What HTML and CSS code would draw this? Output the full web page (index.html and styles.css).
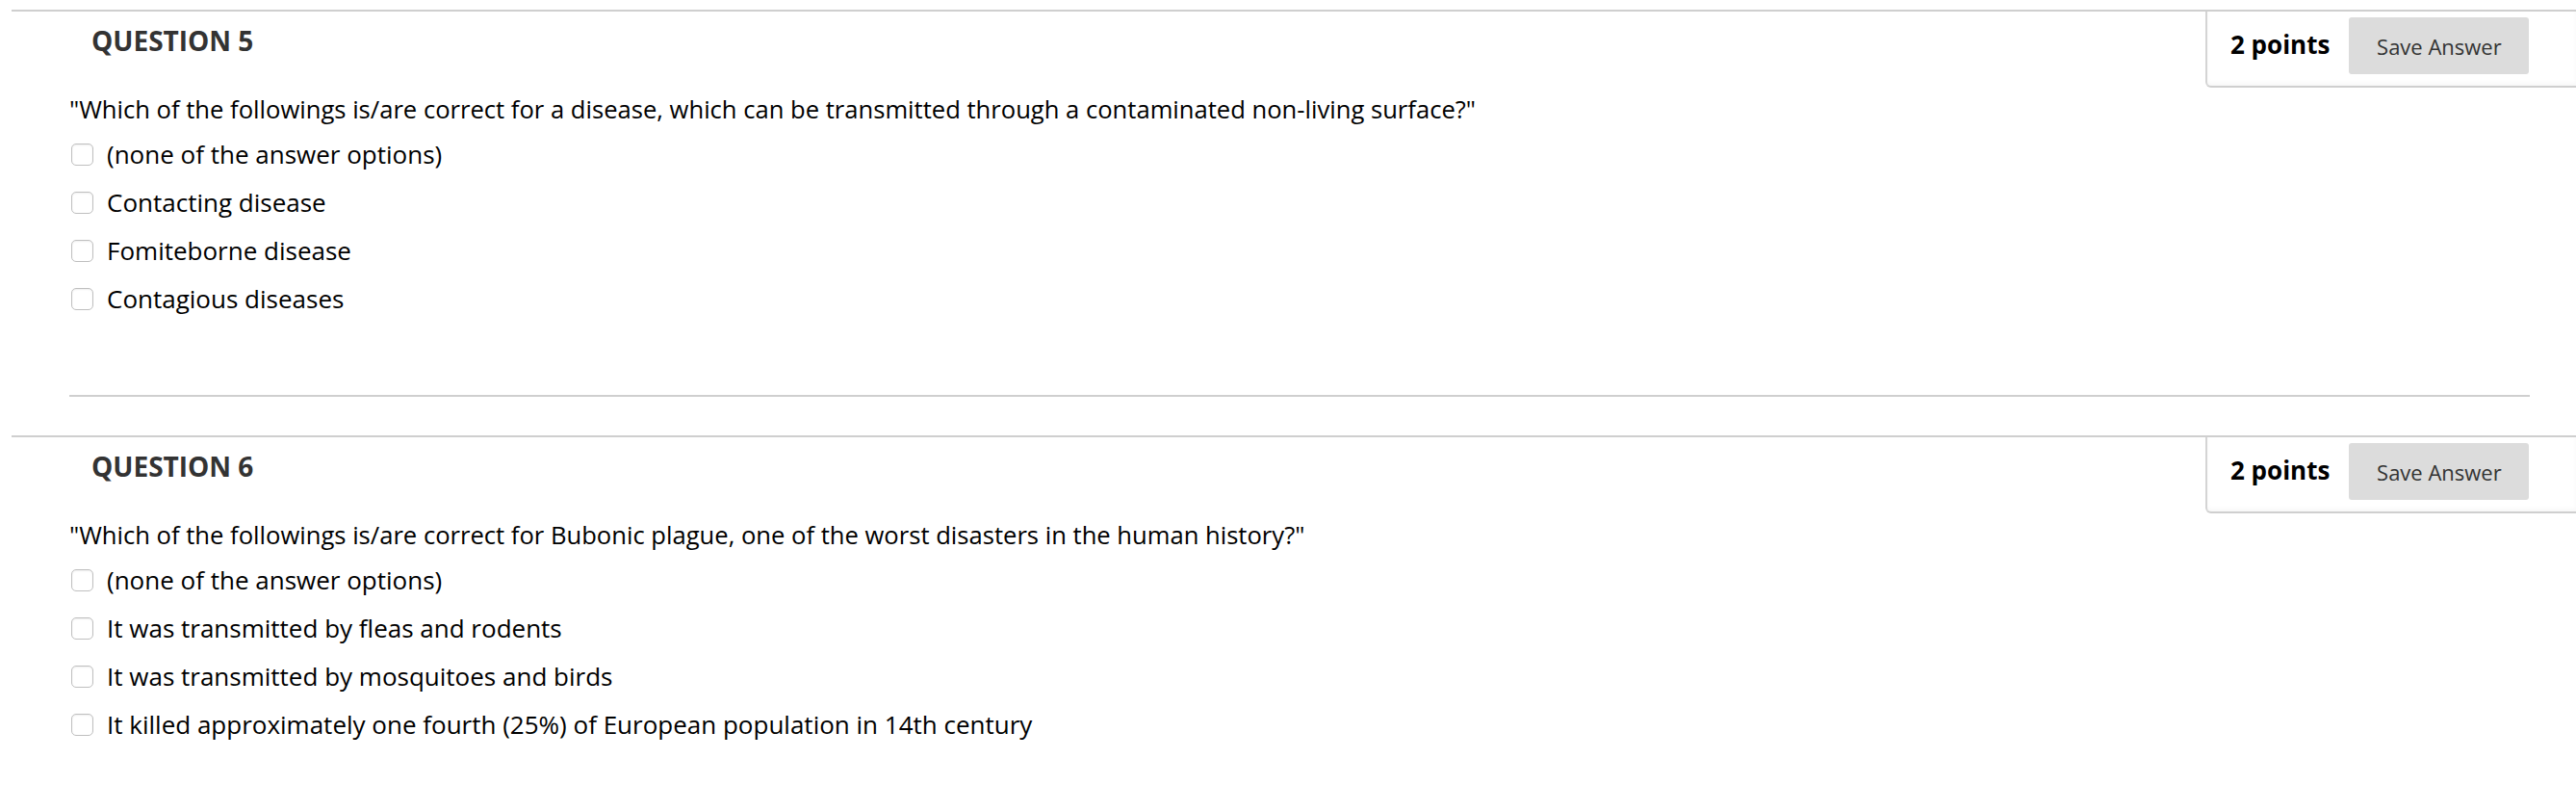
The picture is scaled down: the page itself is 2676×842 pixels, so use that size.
FILE: index.html
```html
<!DOCTYPE html>
<html lang="en">
<head>
<meta charset="utf-8">
<title>Questions</title>
<link rel="stylesheet" href="styles.css">
</head>
<body>
<div class="page">
  <section class="question">
    <div class="q-header">
      <h3 class="q-title">QUESTION 5</h3>
      <div class="q-points">
        <span class="points">2 points</span>
        <button class="save-btn" type="button">Save Answer</button>
      </div>
    </div>
    <div class="q-body">
      <p class="q-text">"Which of the followings is/are correct for a disease, which can be transmitted through a contaminated non-living surface?"</p>
      <ul class="options">
        <li class="option"><span class="checkbox"></span><span class="opt-label">(none of the answer options)</span></li>
        <li class="option"><span class="checkbox"></span><span class="opt-label">Contacting disease</span></li>
        <li class="option"><span class="checkbox"></span><span class="opt-label">Fomiteborne disease</span></li>
        <li class="option"><span class="checkbox"></span><span class="opt-label">Contagious diseases</span></li>
      </ul>
    </div>
  </section>
  <section class="question">
    <div class="q-header">
      <h3 class="q-title">QUESTION 6</h3>
      <div class="q-points">
        <span class="points">2 points</span>
        <button class="save-btn" type="button">Save Answer</button>
      </div>
    </div>
    <div class="q-body">
      <p class="q-text">"Which of the followings is/are correct for Bubonic plague, one of the worst disasters in the human history?"</p>
      <ul class="options">
        <li class="option"><span class="checkbox"></span><span class="opt-label">(none of the answer options)</span></li>
        <li class="option"><span class="checkbox"></span><span class="opt-label">It was transmitted by fleas and rodents</span></li>
        <li class="option"><span class="checkbox"></span><span class="opt-label">It was transmitted by mosquitoes and birds</span></li>
        <li class="option"><span class="checkbox"></span><span class="opt-label">It killed approximately one fourth (25%) of European population in 14th century</span></li>
      </ul>
    </div>
  </section>
</div>
</body>
</html>
```
FILE: styles.css
```css
html, body {
  margin: 0;
  padding: 0;
  background: #fff;
}

body {
  font-family: "Open Sans", "DejaVu Sans", sans-serif;
  color: #000;
  overflow: hidden;
}

.page {
  padding: 10px 0 0 12px;
}

.question {
  border-top: 2px solid #cfcfcf;
  margin-bottom: 40px;
}

.q-header {
  display: flex;
  justify-content: space-between;
  align-items: flex-start;
}

.q-title {
  margin: 0;
  padding: 11px 0 0 83px;
  font-size: 28px;
  font-weight: 700;
  line-height: 38px;
  color: #333;
}

.q-points {
  display: flex;
  align-items: flex-start;
  width: 359px;
  height: 77px;
  padding-left: 24px;
  border-left: 2px solid #d4d4d4;
  border-bottom: 2px solid #cfcfcf;
  border-bottom-left-radius: 6px;
  box-shadow: inset 0 -3px 4px rgba(0, 0, 0, 0.03);
}

.points {
  margin-top: 17px;
  font-size: 26px;
  font-weight: 700;
  line-height: 35px;
  color: #000;
}

.save-btn {
  margin: 6px 0 0 20px;
  width: 187px;
  height: 59px;
  padding: 0;
  border: none;
  border-radius: 3px;
  background: #dcdcdc;
  font-family: "Open Sans", "DejaVu Sans", sans-serif;
  font-size: 22px;
  color: #333;
}

.q-body {
  margin: 0 48px 0 60px;
  padding-bottom: 75px;
  border-bottom: 2px solid #cfcfcf;
}

.q-text {
  margin: 5px 0 0;
  font-size: 25.6px;
  line-height: 35px;
}

.options {
  list-style: none;
  margin: 4px 0 0;
  padding: 0;
}

.option {
  display: flex;
  align-items: center;
  height: 50px;
  font-size: 26px;
}

.checkbox {
  width: 21px;
  height: 21px;
  margin-left: 2px;
  border: 1px solid #bfbfbf;
  border-radius: 5px;
  background: #fff;
  box-shadow: inset 0 1px 2px rgba(0, 0, 0, 0.07);
  flex: none;
}

.opt-label {
  margin-left: 14px;
}
```
